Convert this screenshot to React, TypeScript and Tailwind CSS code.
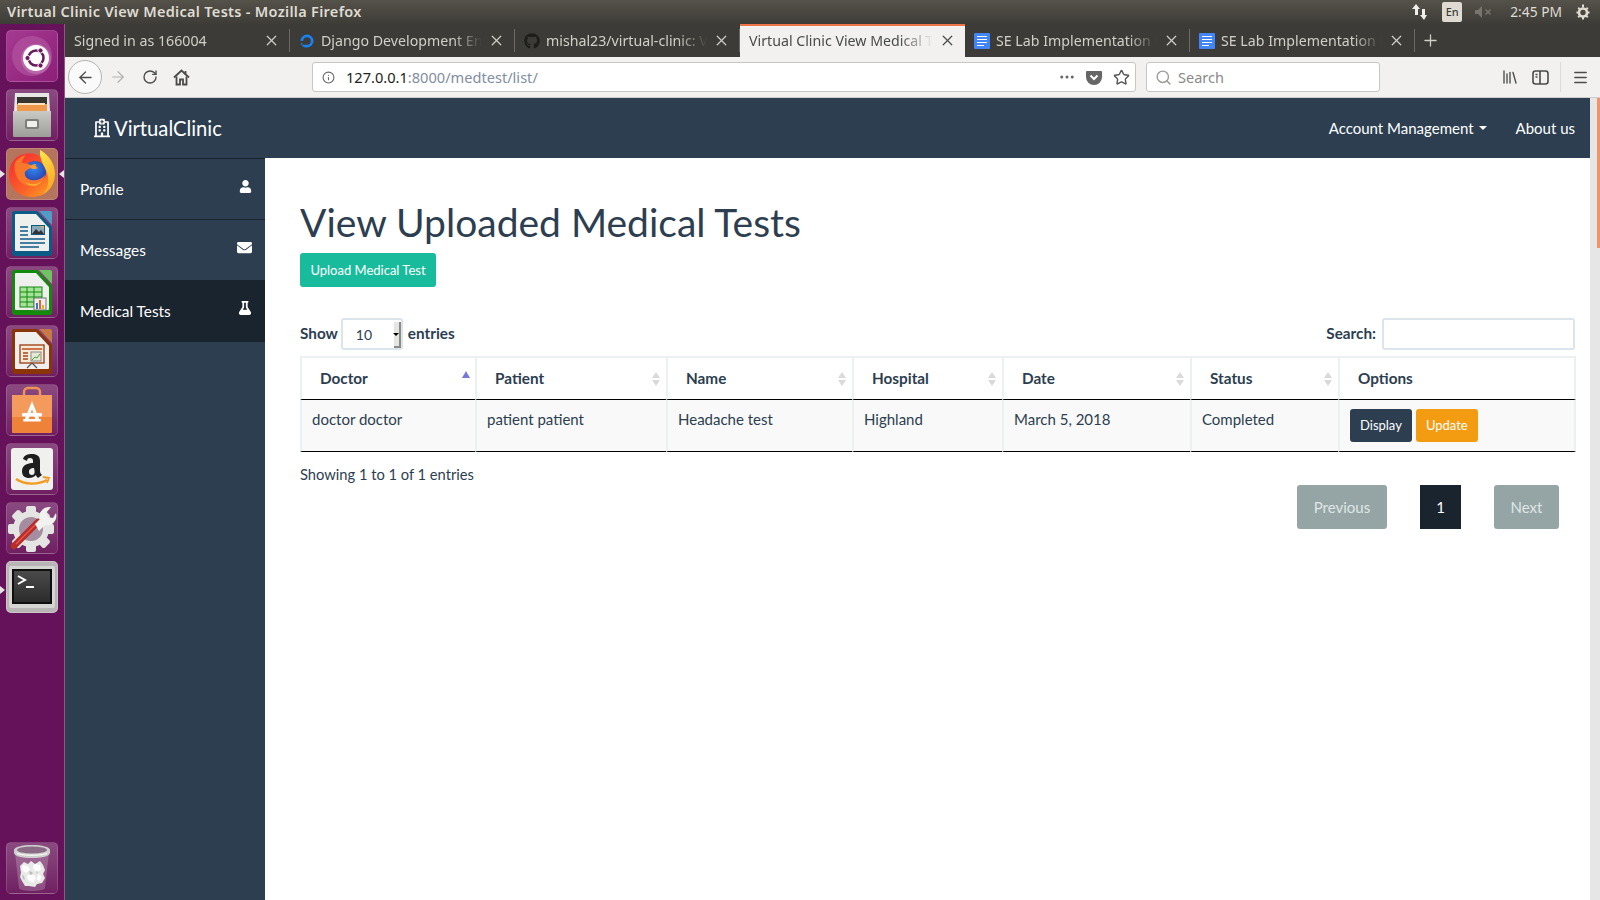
import { ArrowLeft, ArrowRight, Info, Library, Menu, MoreHorizontal, Plus, RotateCw, Search, Star, X } from "lucide-react";
import { FaEnvelope, FaFlask, FaGithub, FaRegHospital, FaUser } from "react-icons/fa";

const UI_FONT = "font-['Noto_Sans',sans-serif]";

const TABS = [
  { label: "Signed in as 166004", icon: null },
  { label: "Django Development Environment", icon: "do" },
  { label: "mishal23/virtual-clinic: Virtual", icon: "gh" },
  { label: "Virtual Clinic View Medical Tests", icon: null, active: true },
  { label: "SE Lab Implementation Report", icon: "doc" },
  { label: "SE Lab Implementation Report", icon: "doc" },
];

const COLUMNS = [
  { name: "Doctor", width: "w-[175px]", sort: "asc" },
  { name: "Patient", width: "w-[191px]", sort: "both" },
  { name: "Name", width: "w-[186px]", sort: "both" },
  { name: "Hospital", width: "w-[150px]", sort: "both" },
  { name: "Date", width: "w-[188px]", sort: "both" },
  { name: "Status", width: "w-[148px]", sort: "both" },
  { name: "Options", width: "w-[238px]", sort: "none" },
];

const ROW = ["doctor doctor", "patient patient", "Headache test", "Highland", "March 5, 2018", "Completed"];

function Tile({ children, active, top }: { children: React.ReactNode; active?: boolean; top?: boolean }) {
  const bg = top
    ? "bg-gradient-to-br from-[#a63a92] to-[#8c1f78]"
    : active
      ? "bg-[#b5745e]"
      : "bg-gradient-to-b from-[#8a4a80] to-[#702062]";
  return (
    <div className={`relative flex h-[52px] w-[52px] items-center justify-center rounded-[5px] border border-white/15 ${bg}`}>
      {children}
    </div>
  );
}

function UbuntuLogo() {
  return (
    <svg width="44" height="44" viewBox="0 0 44 44">
      <circle cx="22" cy="22" r="20" fill="#b55aa4" opacity="0.6" />
      <circle cx="26" cy="25" r="15" fill="#c98abd" opacity="0.5" />
      <circle cx="26" cy="24" r="13" fill="#fff" />
      <circle cx="26" cy="24" r="7.5" fill="none" stroke="#6a1a5c" strokeWidth="2.6" />
      <circle cx="17.5" cy="24" r="2.6" fill="#6a1a5c" stroke="#fff" strokeWidth="1" />
      <circle cx="30.5" cy="16.5" r="2.6" fill="#6a1a5c" stroke="#fff" strokeWidth="1" />
      <circle cx="30.5" cy="31.5" r="2.6" fill="#6a1a5c" stroke="#fff" strokeWidth="1" />
    </svg>
  );
}

function FilesIcon() {
  return (
    <svg width="42" height="46" viewBox="0 0 42 46">
      <defs>
        <linearGradient id="drawer" x1="0" y1="0" x2="0" y2="1">
          <stop offset="0" stopColor="#c9c9c6" />
          <stop offset="1" stopColor="#9d9d9a" />
        </linearGradient>
      </defs>
      <path d="M4 1h34l1 18H3z" fill="#e6e6e4" />
      <path d="M6 5h30v14H6z" fill="#37352f" />
      <path d="M6 12h30v7H6z" fill="#ef9a4a" />
      <path d="M7 11l27 0v2H7z" fill="#f8e4c2" />
      <path d="M2 19h38v25a1 1 0 0 1-1 1H3a1 1 0 0 1-1-1z" fill="url(#drawer)" />
      <rect x="14" y="27" width="14" height="10" rx="2" fill="#7d7d7a" />
      <rect x="16" y="29" width="10" height="6" rx="1" fill="#efefed" />
    </svg>
  );
}

function FirefoxIcon() {
  return (
    <svg width="50" height="50" viewBox="0 0 50 50">
      <defs>
        <linearGradient id="ffbase" x1="0.1" y1="0.2" x2="0.8" y2="1">
          <stop offset="0" stopColor="#f8352f" />
          <stop offset="0.6" stopColor="#f9622a" />
          <stop offset="1" stopColor="#ff9a1f" />
        </linearGradient>
        <linearGradient id="ffflame" x1="0.3" y1="0" x2="0.7" y2="1">
          <stop offset="0" stopColor="#ffe14a" />
          <stop offset="1" stopColor="#ffa11f" />
        </linearGradient>
        <radialGradient id="ffglobe" cx="0.45" cy="0.35" r="0.8">
          <stop offset="0" stopColor="#2f8af0" />
          <stop offset="1" stopColor="#2a2a9c" />
        </radialGradient>
      </defs>
      <path d="M2 26C2 15 8 7 17 5c8-2 14 1 17 3 7 3 13 10 13 19 0 12-10 21-22 21C12 48 2 39 2 26z" fill="url(#ffbase)" />
      <circle cx="28" cy="23" r="11" fill="url(#ffglobe)" />
      <path d="M33 1c8 4 15 13 15 24 0 9-5 17-13 21 6-6 8-14 5-22-2-7-8-13-7-23z" fill="url(#ffflame)" />
      <path d="M8 14c2-4 6-7 11-8-3 3-4 6-4 8 3 0 8 1 10 3-1 3-5 3-7 6-1 3 1 7 6 8 6 1 11-1 14-5-1 7-8 12-16 11C12 36 6 24 8 14z" fill="#f9772a" />
      <path d="M18 33c5 3 12 3 17-1-4 6-12 7-17 1z" fill="#ffb02e" />
      <path d="M22 18c2-2 5-3 7-3-1 2 0 3 2 4-3 2-7 1-9-1z" fill="#ff9a2e" />
    </svg>
  );
}

function DocShape({ edge, corner, children }: { edge: string; corner: string; children: React.ReactNode }) {
  return (
    <svg width="42" height="46" viewBox="0 0 42 46">
      <path d="M28 1h11a2 2 0 0 1 2 2v12z" fill={corner} />
      <path d="M3 1h23l15 16v26a3 3 0 0 1-3 3H4a3 3 0 0 1-3-3V3a2 2 0 0 1 2-2z" fill={edge} />
      <path d="M5 4h20l13 14v22a1 1 0 0 1-1 1H5a1 1 0 0 1-1-1V5a1 1 0 0 1 1-1z" fill="#efefee" />
      {children}
    </svg>
  );
}

function WriterIcon() {
  return (
    <DocShape edge="#0c5a86" corner="#4f9dc7">
      <path d="M9 17h8M9 21h8M9 25h8M9 29h25M9 33h25M9 37h19" stroke="#0c5a86" strokeWidth="1.7" />
      <rect x="20" y="15" width="14" height="10" fill="#0c5a86" />
      <rect x="21" y="16" width="12" height="8" fill="#8aa7bb" />
      <path d="M21 24l4-5 3 3 2-2 3 4z" fill="#333" />
      <path d="M29 16h4v3z" fill="#d8b45a" />
    </DocShape>
  );
}

function CalcIcon() {
  return (
    <DocShape edge="#138a0c" corner="#6ec462">
      <rect x="9" y="18" width="22" height="20" fill="#a6e29a" stroke="#138a0c" />
      <path d="M9 23h22M9 28h22M9 33h22M16 18v20M23 18v20" stroke="#138a0c" />
      <rect x="23" y="29" width="12" height="12" fill="#eee" stroke="#777" />
      <rect x="25" y="34" width="2" height="6" fill="#2a7fc8" />
      <rect x="28" y="31" width="2" height="9" fill="#e8632c" />
      <rect x="31" y="36" width="2" height="4" fill="#e8b02c" />
    </DocShape>
  );
}

function ImpressIcon() {
  return (
    <DocShape edge="#8a3408" corner="#c77a48">
      <rect x="9" y="17" width="24" height="18" fill="#f6ead9" stroke="#a2461a" strokeWidth="1.4" />
      <path d="M11 21h20" stroke="#c24a16" strokeWidth="1.5" />
      <path d="M12 25h5M12 28h5M12 31h5" stroke="#a2461a" strokeWidth="1.6" />
      <rect x="20" y="24" width="10" height="9" fill="#e6e8d6" stroke="#888" />
      <path d="M21 32l3-3 2 1 3-4" stroke="#4c9c3a" fill="none" />
      <path d="M21 35l-5 5M21 35l5 5" stroke="#555" strokeWidth="1.2" />
    </DocShape>
  );
}

function StoreIcon() {
  return (
    <svg width="42" height="48" viewBox="0 0 42 48">
      <path d="M13 12V6a4 4 0 0 1 4-4h8a4 4 0 0 1 4 4v6" fill="none" stroke="#ee9256" strokeWidth="2.5" />
      <path d="M1 9h40v37a1 1 0 0 1-1 1H2a1 1 0 0 1-1-1z" fill="#ee8238" />
      <path d="M1 9h40v22H1z" fill="#f39a5c" />
      <path d="M21 15l8 20h-4l-4-12-4 12h-4z" fill="#fff" />
      <rect x="11" y="27" width="20" height="3.5" rx="1" fill="#fff" />
      <rect x="12" y="33" width="18" height="2.5" rx="1" fill="#fff" />
    </svg>
  );
}

function AmazonIcon() {
  return (
    <svg width="42" height="42" viewBox="0 0 42 42">
      <rect width="42" height="42" rx="3" fill="#f0f0ef" />
      <path d="M12 11c1-4 5-5 9-5 5 0 8 2 8 7v10c0 2 1 3 2 4l-4 3c-1-1-2-2-2-3-2 2-4 3-7 3-4 0-7-2-7-7 0-6 6-8 11-8v-2c0-2-1-3-3-3-2 0-3 1-3 3zm11 9c-3 0-5 1-5 4 0 2 1 3 3 3 3 0 3-3 2-7z" fill="#1e1e1e" />
      <path d="M5 31c9 6 22 6 31 1" fill="none" stroke="#f39b1e" strokeWidth="2.4" />
      <path d="M32 29l6 1-2 5" fill="none" stroke="#f39b1e" strokeWidth="1.8" />
    </svg>
  );
}

function SettingsIcon() {
  return (
    <svg width="50" height="50" viewBox="0 0 50 50">
      <g fill="#e4e4e2">
        <circle cx="24" cy="26" r="18" />
        <rect x="19" y="3" width="10" height="46" rx="2" />
        <rect x="19" y="3" width="10" height="46" rx="2" transform="rotate(45 24 26)" />
        <rect x="19" y="3" width="10" height="46" rx="2" transform="rotate(90 24 26)" />
        <rect x="19" y="3" width="10" height="46" rx="2" transform="rotate(135 24 26)" />
      </g>
      <circle cx="24" cy="26" r="12" fill="#a58c9f" />
      <path d="M7 43L31 19" stroke="#b92c28" strokeWidth="6.5" strokeLinecap="round" />
      <path d="M9 41l20-20" stroke="#e2584e" strokeWidth="1.4" />
      <path d="M28 21l5-5c-2-6 3-13 11-12l-5 6 2 4 5 1 3-5c2 7-4 14-11 12l-6 6z" fill="#f1f1ef" />
    </svg>
  );
}

function TerminalIcon() {
  return (
    <svg width="46" height="42" viewBox="0 0 46 42">
      <defs>
        <linearGradient id="term" x1="0" y1="0" x2="0" y2="1">
          <stop offset="0" stopColor="#4a4a4a" />
          <stop offset="1" stopColor="#2c2c2c" />
        </linearGradient>
      </defs>
      <rect width="46" height="42" rx="2" fill="#d4d4d2" />
      <rect x="3" y="3" width="40" height="35" fill="#0e0e0e" />
      <rect x="5" y="5" width="36" height="31" fill="url(#term)" />
      <path d="M9 10l7 4-7 4" fill="none" stroke="#fff" strokeWidth="2" />
      <path d="M17 21h8" stroke="#fff" strokeWidth="2" />
    </svg>
  );
}

function TrashIcon() {
  return (
    <svg width="40" height="48" viewBox="0 0 40 48">
      <path d="M3 9l4 35c0 2 7 3 13 3s13-1 13-3l4-35z" fill="#ffffff" fillOpacity="0.2" />
      <g fill="#e9e9e7">
        <path d="M8 22l4-4 4 2 3-3 4 3 5-3 3 4 2 5-2 4 2 4-3 5-5 1-2 3-6-1-4 0-3-5-2-4 1-4z" />
      </g>
      <g fill="#ffffff">
        <path d="M11 21l5 1 2 4-4 3-4-3zM22 20l6 1 1 5-5 2-3-4zM15 31l6-1 3 4-3 5-5-2zM26 30l3 2-1 5-3-1z" />
      </g>
      <g fill="#bdbdbb">
        <path d="M17 27l3 1 1 2-3 1zM10 31l2 1 1 4-2-1zM24 27l2 1-1 2z" />
      </g>
      <path d="M2 6c0-3 8-5 18-5s18 2 18 5v3c0 3-8 5-18 5S2 12 2 9z" fill="#cfcfcd" />
      <ellipse cx="20" cy="6" rx="15" ry="3.5" fill="#8b6b86" />
      <path d="M5 9c3 3 27 3 30 0" fill="none" stroke="#f4f4f2" strokeWidth="1.5" />
    </svg>
  );
}

function Launcher() {
  return (
    <div className="relative flex w-[65px] shrink-0 flex-col items-center gap-[7px] border-r border-[#8b5a84] bg-[#66125a] pr-[1px] pt-[6px] pb-[6px]">
      <Tile top><UbuntuLogo /></Tile>
      <Tile><FilesIcon /></Tile>
      <Tile active><FirefoxIcon /></Tile>
      <Tile><WriterIcon /></Tile>
      <Tile><CalcIcon /></Tile>
      <Tile><ImpressIcon /></Tile>
      <Tile><StoreIcon /></Tile>
      <Tile><AmazonIcon /></Tile>
      <Tile><SettingsIcon /></Tile>
      <div className="rounded-[5px] bg-[#b9b5b7]">
        <div className="flex h-[52px] w-[52px] items-center justify-center rounded-[5px] border border-white/25">
          <TerminalIcon />
        </div>
      </div>
      <div className="mt-auto">
        <Tile><TrashIcon /></Tile>
      </div>
      {/* running / focused pips */}
      <span className="absolute left-0 top-[146px] h-0 w-0 border-y-[4px] border-l-[5px] border-y-transparent border-l-[#e8e4e6]" />
      <span className="absolute right-0 top-[146px] h-0 w-0 border-y-[4px] border-r-[5px] border-y-transparent border-r-[#e8e4e6]" />
      <span className="absolute left-0 top-[562px] h-0 w-0 border-y-[4px] border-l-[5px] border-y-transparent border-l-[#e8e4e6]" />
    </div>
  );
}

function TabIcon({ kind }: { kind: string | null }) {
  if (kind === "do") {
    return (
      <svg width="16" height="16" viewBox="0 0 16 16" className="shrink-0">
        <path d="M8 14.5V11.8A3.8 3.8 0 1 0 4.2 8H1.5A6.5 6.5 0 1 1 8 14.5z" fill="#1a82f0" />
        <path d="M5.5 11.8H8v2.7H5.5zM3.4 13.7V11.8h2.1v1.9zM1.8 11.8V10.2h1.6v1.6z" fill="#1a82f0" />
      </svg>
    );
  }
  if (kind === "gh") return <FaGithub className="h-4 w-4 shrink-0 text-[#1d1d1b]" />;
  if (kind === "doc") {
    return (
      <div className="flex h-4 w-4 shrink-0 flex-col justify-center gap-[2px] rounded-[1px] bg-[#4285f4] px-[3px]">
        <span className="h-px bg-white" />
        <span className="h-px bg-white" />
        <span className="h-px bg-white" />
        <span className="h-px w-[7px] bg-white" />
      </div>
    );
  }
  return null;
}

function TitleBar() {
  return (
    <div className={`flex h-6 shrink-0 items-center justify-between bg-gradient-to-b from-[#55524a] to-[#3e3c37] pl-[7px] pr-[9px] ${UI_FONT}`}>
      <span className="text-[14.5px] font-semibold tracking-[0.3px] text-[#dfdbd2]">Virtual Clinic View Medical Tests - Mozilla Firefox</span>
      <div className="flex items-center text-[#dfdbd2]">
        <svg width="18" height="18" viewBox="0 0 18 18" fill="#f0eee8" className="mr-[13px]">
          <path d="M5 1l4 5H7v6H4V6H1zM13 17l-4-5h2V6h3v6h2z" />
        </svg>
        <span className="mr-[13px] flex h-5 w-5 items-center justify-center rounded-[2px] bg-[#dfdbd2] text-[11px] font-medium text-[#3c3b37]">En</span>
        <svg width="18" height="12" viewBox="0 0 18 12" fill="#77756e" className="mr-[17px]">
          <path d="M0 4h3l4-4v12L3 8H0zM10 4l1-1 2 2 2-2 1 1-2 2 2 2-1 1-2-2-2 2-1-1 2-2z" />
        </svg>
        <span className="mr-[13px] text-[13.8px]">2:45 PM</span>
        <svg width="16" height="16" viewBox="0 0 16 16" fill="none" stroke="#dfdbd2" strokeWidth="2.6">
          <circle cx="8" cy="8.5" r="4" />
          <path d="M8 0.5v3M1.5 8.5h2M12.5 8.5h2M3.2 3.7l1.4 1.4M12.8 3.7l-1.4 1.4M3.2 13.3l1.4-1.4M12.8 13.3l-1.4-1.4M8 13v2.5" strokeWidth="2" />
        </svg>
      </div>
    </div>
  );
}

function TabBar() {
  return (
    <div className={`flex h-[33px] shrink-0 items-stretch bg-[#3c3b37] ${UI_FONT}`}>
      {TABS.map((tab, i) => (
        <div
          key={i}
          className={`flex w-[225px] items-center gap-[6px] pl-[9px] pr-[9px] text-[14.2px] ${
            tab.active
              ? "border-t-2 border-[#f0744a] bg-[#f2f1ef] pb-[2px] text-[#4a4a48]"
              : "my-[5px] border-r border-[#6b6963] text-[#d2cfc8]"
          }`}
        >
          <TabIcon kind={tab.icon} />
          <span className="min-w-0 flex-1 overflow-hidden whitespace-nowrap [mask-image:linear-gradient(to_right,black_82%,transparent)]">
            {tab.label}
          </span>
          <X className={`h-[17px] w-[17px] shrink-0 ${tab.active ? "text-[#4a4a48]" : "text-[#d2cfc8]"}`} strokeWidth={1.7} />
        </div>
      ))}
      <div className="flex items-center pl-[6px] text-[#d2cfc8]">
        <Plus className="h-[19px] w-[19px]" strokeWidth={1.6} />
      </div>
    </div>
  );
}

function HomeIcon() {
  return (
    <svg width="17" height="17" viewBox="0 0 17 17" fill="none" stroke="#4b4b49" strokeWidth="1.8" className="ml-[15px]">
      <path d="M1 8.5L8.5 1.5 16 8.5" />
      <path d="M12.5 5V2" />
      <path d="M3.5 7.5V15.5h3.5v-5h3v5h3.5V7.5" />
    </svg>
  );
}

function Toolbar() {
  return (
    <div className={`flex h-[41px] shrink-0 items-center border-b border-[#cfcdca] bg-[#f2f1ef] pl-[3px] text-[#4b4b49] ${UI_FONT}`}>
      <div className="flex h-[34px] w-[34px] items-center justify-center rounded-full border border-[#b5b3b0] bg-[#fafafa]">
        <ArrowLeft className="h-[19px] w-[19px]" strokeWidth={1.6} />
      </div>
      <ArrowRight className="ml-[7px] h-[18px] w-[18px] text-[#b2b1af]" strokeWidth={1.6} />
      <RotateCw className="ml-[15px] h-4 w-4" strokeWidth={2} />
      <HomeIcon />
      <div className="ml-[122px] flex h-[30px] w-[824px] items-center rounded-[3px] border border-[#c8c6c3] bg-white pl-[9px] pr-[5px]">
        <Info className="h-[13px] w-[13px] text-[#666]" strokeWidth={2} />
        <span className="ml-[11px] pt-px text-[14.6px] text-[#222]">127.0.0.1</span>
        <span className="pt-px text-[14.6px] text-[#7f8ea0]">:8000/medtest/list/</span>
        <MoreHorizontal className="ml-auto h-[18px] w-[18px] text-[#666]" />
        <svg width="16" height="16" viewBox="0 0 16 16" className="ml-[10px]">
          <path d="M1 2h14a1 1 0 0 1 1 1v5a8 8 0 0 1-16 0V3a1 1 0 0 1 1-1z" fill="#666" />
          <path d="M4.5 6.5L8 10l3.5-3.5" fill="none" stroke="#fff" strokeWidth="2" />
        </svg>
        <Star className="ml-[11px] h-[17px] w-[17px] text-[#555]" strokeWidth={2} />
      </div>
      <div className="ml-[10px] flex h-[30px] w-[234px] items-center rounded-[3px] border border-[#c8c6c3] bg-white pl-[8px]">
        <Search className="h-[17px] w-[17px] text-[#9a9a98]" strokeWidth={2} />
        <span className="ml-[6px] pt-px text-[14.5px] text-[#8a8a88]">Search</span>
      </div>
      <Library className="ml-[121px] h-[18px] w-[18px]" strokeWidth={1.8} />
      <svg width="17" height="15" viewBox="0 0 17 15" fill="none" stroke="#4b4b49" strokeWidth="1.6" className="ml-[13px]">
        <rect x="1" y="1" width="15" height="13" rx="2.5" />
        <path d="M8 1v13" />
        <path d="M3.5 4.5h2M3.5 7h2" />
      </svg>
      <span className="ml-[11px] h-[30px] w-px bg-[#dcdad7]" />
      <Menu className="ml-[11px] h-[17px] w-[17px]" strokeWidth={2} />
    </div>
  );
}

function Navbar() {
  return (
    <div className="flex h-[60px] shrink-0 items-center bg-[#2c3e50] pl-[29px] pr-[15px] text-white">
      <FaRegHospital className="h-[20px] w-[16px]" />
      <span className="ml-[4px] text-[20.2px]">VirtualClinic</span>
      <span className="ml-auto text-[15px]">Account Management</span>
      <span className="ml-[5px] h-0 w-0 border-x-[4px] border-t-[4px] border-x-transparent border-t-white" />
      <span className="ml-[29px] text-[15px]">About us</span>
    </div>
  );
}

function SidebarItem({ label, icon, active }: { label: string; icon: React.ReactNode; active?: boolean }) {
  return (
    <div className={`flex items-center justify-between pl-[15px] pr-[13px] text-[15.4px] text-white ${active ? "h-[62px] bg-[#1a242f]" : "h-[61px] border-t border-[#1a242f]"}`}>
      <span className="pt-[2px]">{label}</span>
      <span className="-mt-[6px] flex w-4 justify-end">{icon}</span>
    </div>
  );
}

function SortArrows({ sort }: { sort: string }) {
  if (sort === "none") return null;
  if (sort === "asc") {
    return <span className="absolute right-[5px] top-[13px] h-0 w-0 border-x-[4px] border-b-[7px] border-x-transparent border-b-[#7878d8]" />;
  }
  return (
    <span className="absolute right-[6px] top-[14px] flex flex-col gap-[2px]">
      <span className="h-0 w-0 border-x-[4px] border-b-[6px] border-x-transparent border-b-[#dadada]" />
      <span className="h-0 w-0 border-x-[4px] border-t-[6px] border-x-transparent border-t-[#dadada]" />
    </span>
  );
}

function MedTestTable() {
  return (
    <table className="w-[1276px] table-fixed border-separate border-spacing-0 text-[15px] text-[#2c3e50]">
      <thead>
        <tr className="h-[44px]">
          {COLUMNS.map((c) => (
            <th
              key={c.name}
              className={`${c.width} relative border-b border-l-2 border-t-2 border-b-black border-l-[#ecf0f1] border-t-[#ecf0f1] pl-[18px] text-left align-middle text-[15.3px] font-bold last:border-r-2 last:border-r-[#ecf0f1]`}
            >
              {c.name}
              <SortArrows sort={c.sort} />
            </th>
          ))}
        </tr>
      </thead>
      <tbody>
        <tr className="h-[52px] bg-[#f9f9f9]">
          {ROW.map((v) => (
            <td key={v} className="border-b border-l-2 border-b-black border-l-[#ecf0f1] px-[10px] pt-[8px] align-top">
              {v}
            </td>
          ))}
          <td className="border-b border-l-2 border-r-2 border-b-black border-l-[#ecf0f1] border-r-[#ecf0f1] px-[10px] align-middle">
            <div className="flex gap-[4px] text-[13px] text-white">
              <button className="h-[33px] rounded-[3px] bg-[#2c3e50] px-[10px]">Display</button>
              <button className="h-[33px] rounded-[3px] bg-[#f39c12] px-[10px]">Update</button>
            </div>
          </td>
        </tr>
      </tbody>
    </table>
  );
}

function MainContent() {
  return (
    <div className="min-w-0 flex-1 bg-white pl-[35px] pr-[14px] pt-[41px] text-[15px] text-[#2c3e50]">
      <h1 className="text-[39px] leading-[47px]">View Uploaded Medical Tests</h1>
      <button className="mt-[7px] block h-[34px] w-[136px] rounded-[3px] bg-[#18bc9c] pt-[2px] text-[13px] text-white">Upload Medical Test</button>

      <div className="mt-[31px] flex h-[32px] items-center justify-between">
        <div className="flex items-center text-[15.3px] font-bold">
          <span className="mb-[2px]">Show</span>
          <div className="relative ml-[3px] mr-[5px]">
            <select className="h-[32px] w-[62px] appearance-none rounded-[3px] border-2 border-[#dce4ec] bg-white pl-[13px] text-[14px] font-normal">
              <option>10</option>
            </select>
            <span className="absolute bottom-[2px] right-[2px] flex h-[26px] w-[7px] items-center justify-center border-b-2 border-r-2 border-[#8b8b89] bg-[#e5e5e3]">
              <span className="h-0 w-0 border-x-[3px] border-t-[3px] border-x-transparent border-t-black" />
            </span>
          </div>
          <span className="mb-[2px]">entries</span>
        </div>
        <div className="mr-[1px] flex items-center text-[15.3px] font-bold">
          <span className="mb-[2px]">Search:</span>
          <input className="ml-[6px] h-[32px] w-[193px] rounded-[3px] border-2 border-[#dce4ec] bg-white" />
        </div>
      </div>

      <div className="mt-[6px]">
        <MedTestTable />
      </div>

      <p className="mt-[11px] text-[14.7px]">Showing 1 to 1 of 1 entries</p>

      <div className="flex w-[1276px] justify-end gap-[33px] pr-[17px]">
        <span className="flex h-[44px] w-[90px] items-center justify-center rounded-[3px] bg-[#95a5a6] pt-px text-[#dfe5e5]">Previous</span>
        <span className="flex h-[44px] w-[41px] items-center justify-center bg-[#1a242f] pt-px text-white">1</span>
        <span className="flex h-[44px] w-[65px] items-center justify-center rounded-[3px] bg-[#95a5a6] pt-px text-[#dfe5e5]">Next</span>
      </div>
    </div>
  );
}

function Scrollbar() {
  return (
    <div className="flex w-[10px] shrink-0 justify-end bg-[#e6e6e6]">
      <div className="h-[150px] w-[3px] bg-[#f0936a]" />
    </div>
  );
}

export default function App() {
  return (
    <div className="flex h-[900px] w-[1600px] flex-col overflow-hidden font-['Lato',sans-serif]">
      <TitleBar />
      <div className="flex min-h-0 flex-1">
        <Launcher />
        <div className="flex min-w-0 flex-1 flex-col">
          <TabBar />
          <Toolbar />
          <div className="flex min-h-0 flex-1">
            <div className="flex min-w-0 flex-1 flex-col">
              <Navbar />
              <div className="flex min-h-0 flex-1">
                <div className="w-[200px] shrink-0 bg-[#2c3e50]">
                  <SidebarItem label="Profile" icon={<FaUser className="h-[13px] w-[13px]" />} />
                  <SidebarItem label="Messages" icon={<FaEnvelope className="h-[15px] w-[15px]" />} />
                  <SidebarItem label="Medical Tests" icon={<FaFlask className="h-[14px] w-[14px]" />} active />
                </div>
                <MainContent />
              </div>
            </div>
            <Scrollbar />
          </div>
        </div>
      </div>
    </div>
  );
}
